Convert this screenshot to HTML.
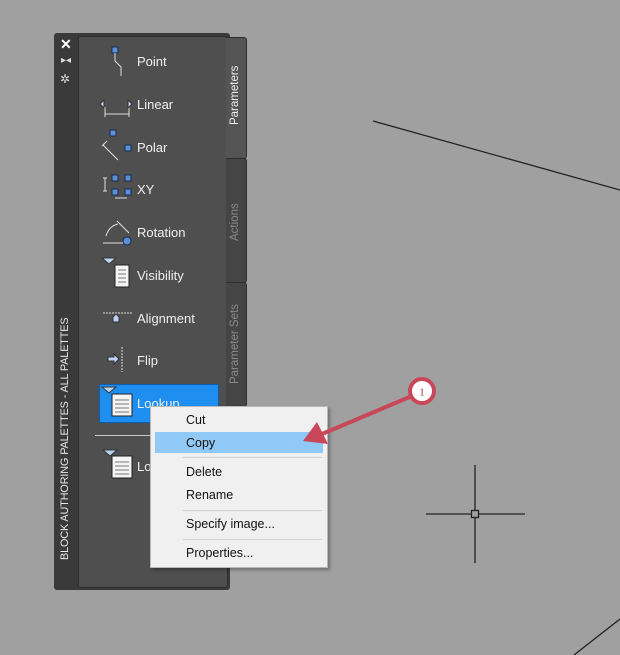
<!DOCTYPE html>
<html><head><style>
body{margin:0;width:620px;height:655px;background:#a0a0a0;overflow:hidden;position:relative;font-family:"Liberation Sans",Arial,sans-serif}
.a{position:absolute}
.lbl{position:absolute;color:#f0f0f0;font-size:13px}
.menu{position:absolute;left:150px;top:406px;width:176px;height:160px;background:#f0f0f0;border:1px solid #b8b8b8;box-shadow:2px 2px 3px rgba(0,0,0,.3);font-size:12.5px;color:#111}
.mi{position:absolute;left:35px}
.sep{position:absolute;left:32px;right:5px;height:1px;background:#d0d0d0}
</style></head><body>
<div class="a" style="left:54px;top:33px;width:176px;height:557px;background:#3a3a3a;border-radius:3px"></div>
<div class="a" style="left:78px;top:36px;width:148px;height:550px;background:#4f4f4f;border:1px solid #2e2e2e;border-radius:3px"></div>
<div class="a" style="left:226px;top:37px;width:20px;height:120px;background:#545454;border:1px solid #2e2e2e;border-left:none;border-radius:0 3px 3px 0"></div>
<div class="a" style="left:226px;top:158px;width:20px;height:123px;background:#454545;border:1px solid #2e2e2e;border-left:none;border-radius:0 3px 3px 0"></div>
<div class="a" style="left:226px;top:282px;width:20px;height:123px;background:#454545;border:1px solid #2e2e2e;border-left:none;border-radius:0 3px 3px 0"></div>
<div class="a" style="left:229px;top:125px;transform:rotate(-90deg);transform-origin:0 0;color:#f0f0f0;font-size:11.5px;white-space:nowrap">Parameters</div>
<div class="a" style="left:229px;top:241px;transform:rotate(-90deg);transform-origin:0 0;color:#8a8a8a;font-size:11.5px;white-space:nowrap">Actions</div>
<div class="a" style="left:229px;top:384px;transform:rotate(-90deg);transform-origin:0 0;color:#8a8a8a;font-size:11.5px;white-space:nowrap">Parameter Sets</div>
<div class="a" style="left:59px;top:560px;transform:rotate(-90deg);transform-origin:0 0;color:#e8e8e8;font-size:10.8px;white-space:nowrap;letter-spacing:-0.1px">BLOCK AUTHORING PALETTES - ALL PALETTES</div>
<div class="a" style="left:60px;top:36px;color:#fff;font-size:14px;font-weight:bold">✕</div>
<div class="a" style="left:61px;top:55px;color:#ddd;font-size:10px">▸◂</div>
<div class="a" style="left:60px;top:72px;color:#ddd;font-size:12px">✲</div>
<div class="a" style="left:99px;top:384px;width:118px;height:37px;background:#1e8ff0;border:1px solid #0a5fb0;border-radius:2px"></div>
<div class="a" style="left:95px;top:435px;width:132px;height:1px;background:#c8c8c8"></div>
<div class="lbl" style="left:137px;top:54px">Point</div>
<div class="lbl" style="left:137px;top:97px">Linear</div>
<div class="lbl" style="left:137px;top:140px">Polar</div>
<div class="lbl" style="left:137px;top:182px">XY</div>
<div class="lbl" style="left:137px;top:225px">Rotation</div>
<div class="lbl" style="left:137px;top:268px">Visibility</div>
<div class="lbl" style="left:137px;top:311px">Alignment</div>
<div class="lbl" style="left:137px;top:353px">Flip</div>
<div class="lbl" style="left:137px;top:396px">Lookup</div>
<div class="lbl" style="left:137px;top:459px">Lo</div>
<svg class="a" style="left:0;top:0" width="620" height="655">
<g fill="#5b8fd8" stroke="#1a2a50" stroke-width="1">
<rect x="112" y="47" width="6" height="6"/>
<rect x="110" y="130" width="6" height="6"/><rect x="125" y="145" width="6" height="6"/>
<rect x="112" y="175" width="6" height="6"/><rect x="125" y="175" width="6" height="6"/><rect x="112" y="189" width="6" height="6"/><rect x="125" y="189" width="6" height="6"/>
<circle cx="127" cy="241" r="4"/>
</g>
<g stroke="#ddd" fill="none" stroke-width="1">
<path d="M115 53v8l6 6v9"/>
<path d="M105 107v10M129 107v10M105 114h24"/>
<path d="M103 145l15 15M107 141l-5 5"/>
<path d="M105 178v13M103 178h4M103 191h4M115 198h12"/>
<path d="M103 243h20M106 236q3-10 12-12M117 221l12 12"/>
<path d="M103 313h30" stroke-dasharray="2 1"/>
<path d="M122 347v25" stroke-dasharray="2 1"/>
</g>
<g fill="#bcd4f4" stroke="#333">
<path d="M104 100l-4 4 4 4z"/><path d="M128 100l4 4-4 4z"/>
<path d="M102 258h14l-7 6z"/><path d="M102 387h14l-7 6z"/><path d="M103 450h14l-7 6z"/>
<path d="M113 317l3-3 3 3v5h-6z"/>
<path d="M108 357h6v-3l5 5-5 5v-3h-6z"/>
</g>
<g fill="#f4f4f4" stroke="#222">
<rect x="115" y="265" width="14" height="22"/><rect x="112" y="394" width="20" height="22"/><rect x="112" y="456" width="20" height="22"/>
</g>
<g stroke="#777"><path d="M118 270h8M118 274h8M118 278h8M118 282h8M115 400h14M115 404h14M115 408h14M115 412h14M115 462h14M115 466h14M115 470h14M115 474h14"/></g>
<path d="M373 121L620 190" stroke="#222" stroke-width="1.3"/>
<path d="M574 655L620 619" stroke="#222" stroke-width="1.3"/>
<path d="M426 514h99M475 465v98" stroke="#222" stroke-width="1.3"/>
<rect x="471.5" y="510.5" width="7" height="7" fill="#a0a0a0" stroke="#222" stroke-width="1.3"/>
</svg>
<div class="menu">
<div class="a" style="left:4px;top:25px;width:168px;height:21px;background:#90c8f6"></div>
<div class="mi" style="top:6px">Cut</div>
<div class="mi" style="top:29px">Copy</div>
<div class="sep" style="top:50px"></div>
<div class="mi" style="top:58px">Delete</div>
<div class="mi" style="top:81px">Rename</div>
<div class="sep" style="top:103px"></div>
<div class="mi" style="top:110px">Specify image...</div>
<div class="sep" style="top:132px"></div>
<div class="mi" style="top:139px">Properties...</div>
</div>
<svg class="a" style="left:0;top:0" width="620" height="655">
<path d="M412 396L322 434" stroke="#c8485a" stroke-width="4"/>
<path d="M303 441l14-19 11 22z" fill="#c8485a"/>
<circle cx="422" cy="391" r="12" fill="#fff" stroke="#c8485a" stroke-width="4"/>
<text x="422" y="395.5" font-size="11" text-anchor="middle" fill="#a03040" font-family="Liberation Serif">1</text>
</svg>
</body></html>
